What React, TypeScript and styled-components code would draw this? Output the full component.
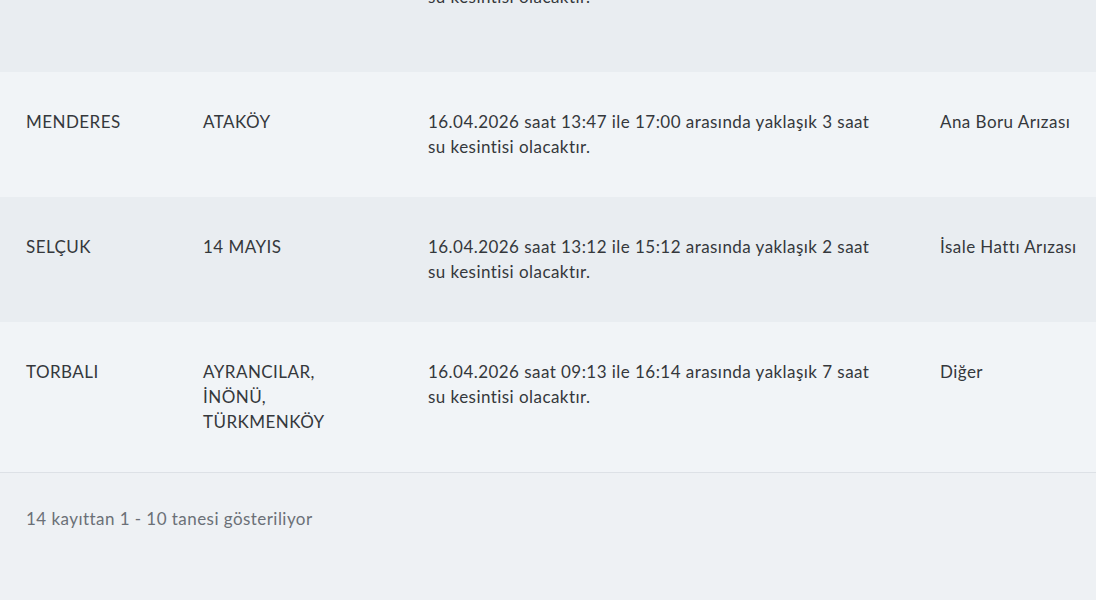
import React from "react";
import styled, { createGlobalStyle } from "styled-components";

const Global = createGlobalStyle`
  html, body { margin: 0; padding: 0; background: #eef1f4; }
  body { font-family: Lato, "Noto Sans", sans-serif; color: #35383c; overflow: hidden; }
`;

const Page = styled.div`
  width: 1096px;
  height: 600px;
  overflow: hidden;
  background: #eef1f4;
`;

const Table = styled.div`
  display: flex;
  flex-direction: column;
  margin-top: -78px;
  border-bottom: 1px solid #dde1e6;
`;

const Row = styled.div<{ $shade: boolean }>`
  display: grid;
  grid-template-columns: 177px 225px 512px 1fr;
  padding: 37px 0 38px;
  background: ${(p) => (p.$shade ? "#e9edf1" : "#f1f4f7")};
`;

const Cell = styled.div`
  padding-left: 26px;
  font-size: 17px;
  line-height: 25px;
  letter-spacing: 0.45px;
  white-space: nowrap;
  display: flex;
  flex-direction: column;
`;

const Footer = styled.div`
  padding: 33px 26px;
  font-size: 17px;
  line-height: 25px;
  letter-spacing: 0.45px;
  color: #6b7077;
`;

type R = { district: string; hoods: string[]; desc: string[]; cause: string };

const rows: R[] = [
  { district: "", hoods: ["\u00a0", "\u00a0", "\u00a0"], desc: ["", "su kesintisi olacaktır."], cause: "" },
  {
    district: "MENDERES",
    hoods: ["ATAKÖY"],
    desc: ["16.04.2026 saat 13:47 ile 17:00 arasında yaklaşık 3 saat", "su kesintisi olacaktır."],
    cause: "Ana Boru Arızası",
  },
  {
    district: "SELÇUK",
    hoods: ["14 MAYIS"],
    desc: ["16.04.2026 saat 13:12 ile 15:12 arasında yaklaşık 2 saat", "su kesintisi olacaktır."],
    cause: "İsale Hattı Arızası",
  },
  {
    district: "TORBALI",
    hoods: ["AYRANCILAR,", "İNÖNÜ,", "TÜRKMENKÖY"],
    desc: ["16.04.2026 saat 09:13 ile 16:14 arasında yaklaşık 7 saat", "su kesintisi olacaktır."],
    cause: "Diğer",
  },
];

export default function App() {
  return (
    <Page>
      <Global />
      <Table>
        {rows.map((r, i) => (
          <Row key={i} $shade={i % 2 === 0}>
            <Cell>{r.district}</Cell>
            <Cell>
              {r.hoods.map((h, j) => (
                <span key={j}>{h}</span>
              ))}
            </Cell>
            <Cell>
              {r.desc.map((d, j) => (
                <span key={j}>{d || "\u00a0"}</span>
              ))}
            </Cell>
            <Cell>{r.cause}</Cell>
          </Row>
        ))}
      </Table>
      <Footer>14 kayıttan 1 - 10 tanesi gösteriliyor</Footer>
    </Page>
  );
}
